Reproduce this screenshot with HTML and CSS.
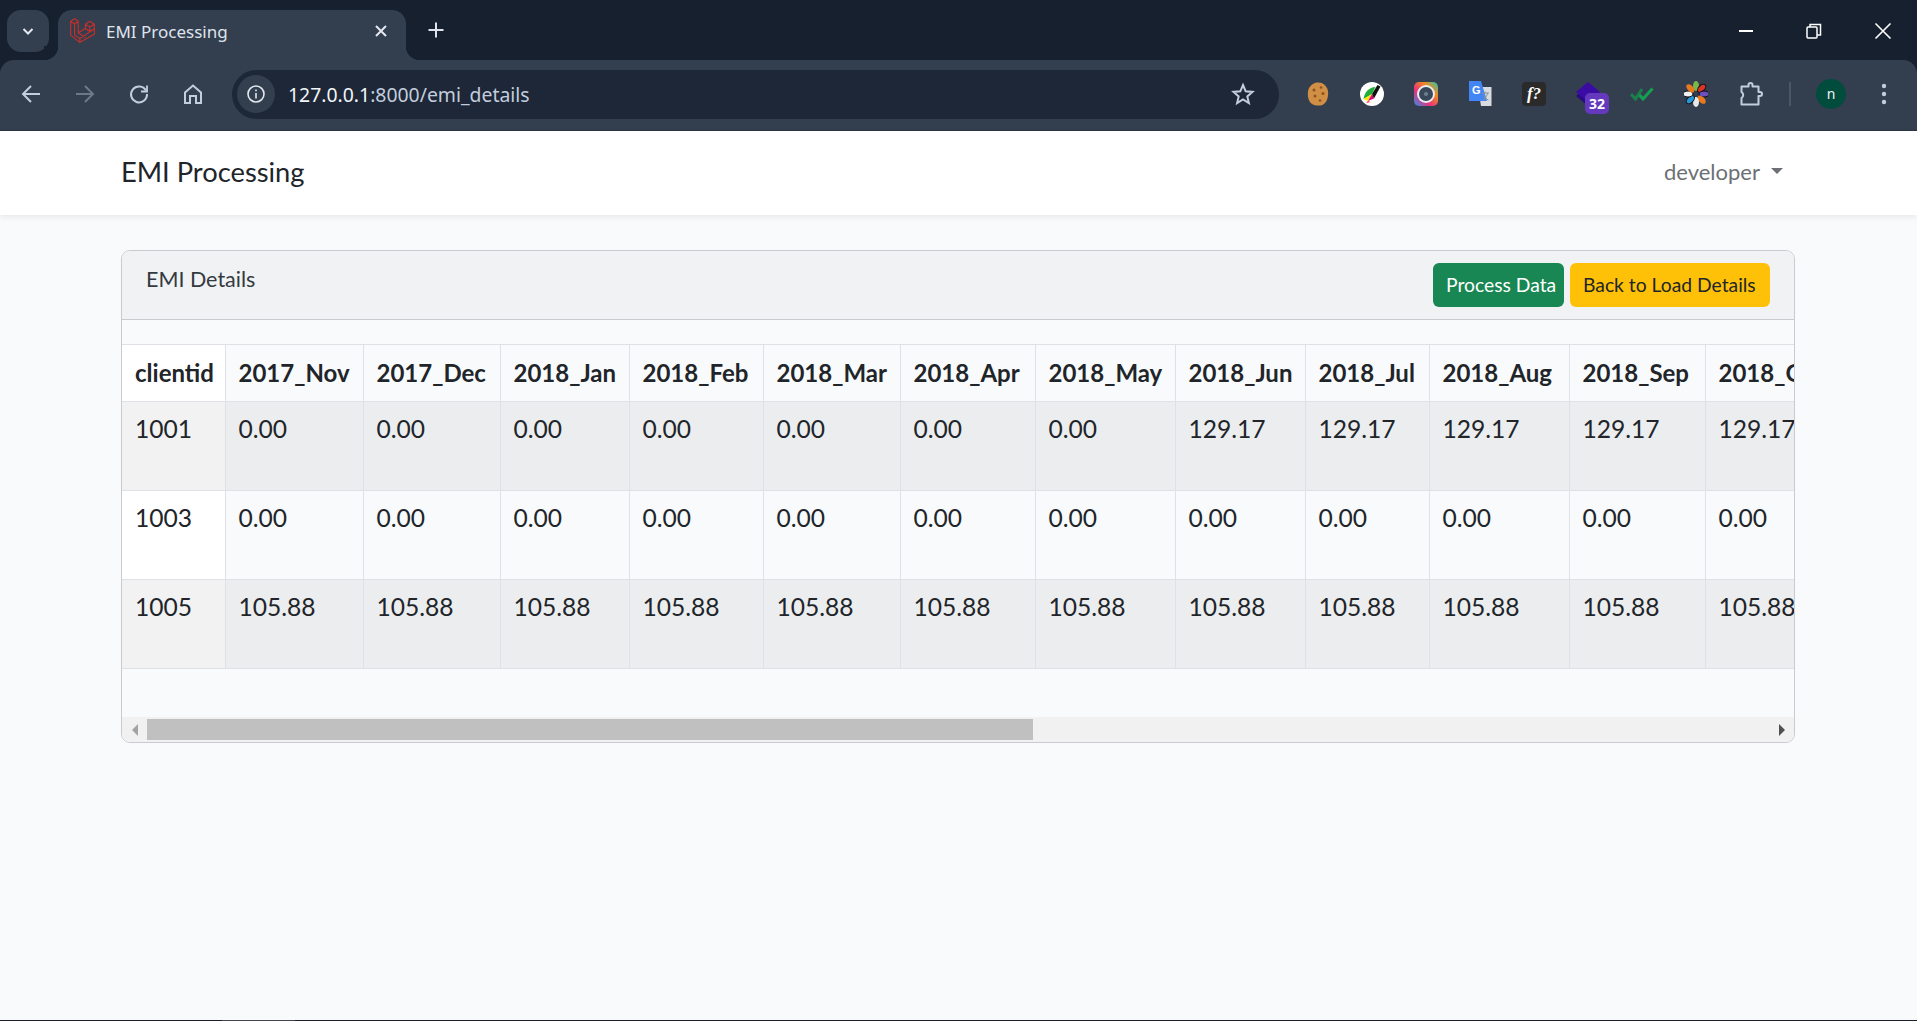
FILE: index.html
```html
<!DOCTYPE html>
<html lang="en">
<head>
    <meta charset="UTF-8">
    <meta name="viewport" content="width=device-width, initial-scale=1.0">
    <title>EMI Processing</title>
    <link rel="stylesheet" href="styles.css">
</head>
<body>
    <div class="browser">
        <!-- Browser tab strip -->
        <div class="tabstrip">
            <button class="tab-search">
                <svg width="16" height="16" viewBox="0 0 16 16"><path d="M3.5 6 8 10.5 12.500 6" fill="none" stroke="#e3e8f0" stroke-width="2"/></svg>
            </button>
            <div class="tab">
                <svg class="favicon" width="28" height="28" viewBox="25 20 85 85" fill="none" stroke="#c5302b" stroke-width="3.500" stroke-linejoin="round">
                    <path d="M30 33 42 25 53 33 42 41ZM30 33V75L58 97 102 72V56L58 85 42 75V41M53 33V68L75 82M58 85V97"/>
                    <path d="M75 42 88 33 102 42 88 50ZM75 42V55L53 68M102 42V56L88 64V50M88 64 75 55"/>
                </svg>
                <span class="tab-title">EMI Processing</span>
                <svg class="tab-close" width="14" height="14" viewBox="0 0 14 14"><path d="M2 2 12 12M12 2 2 12" stroke="#e3e8f0" stroke-width="2"/></svg>
            </div>
            <svg class="new-tab" width="18" height="18" viewBox="0 0 18 18"><path d="M9 1.500V16.500M1.500 9H16.500" stroke="#dfe4ec" stroke-width="2"/></svg>
            <div class="win-controls">
                <svg width="16" height="16" viewBox="0 0 16 16"><path d="M1 8H15" stroke="#fff" stroke-width="2"/></svg>
                <svg width="16" height="16" viewBox="0 0 16 16" fill="none" stroke="#fff" stroke-width="1.500"><rect x="1" y="4" width="10" height="11" rx="1"/><path d="M4 4V1.500H14.500V12H11"/></svg>
                <svg width="18" height="18" viewBox="0 0 18 18"><path d="M1.500 1.500 16.500 16.500M16.500 1.500 1.500 16.500" stroke="#fff" stroke-width="1.600"/></svg>
            </div>
        </div>

        <!-- Browser toolbar -->
        <div class="toolbar">
            <div class="nav-buttons">
                <svg width="22" height="22" viewBox="0 0 22 22" fill="none" stroke="#c3cddd" stroke-width="2"><path d="M20 11H3M11 3 3 11 11 19"/></svg>
                <svg width="22" height="22" viewBox="0 0 22 22" fill="none" stroke="#6f7887" stroke-width="2"><path d="M2 11H19M11 3 19 11 11 19"/></svg>
                <svg width="22" height="22" viewBox="0 0 22 22" fill="none" stroke="#c3cddd" stroke-width="2"><path d="M18 7.500A8 8 0 1 0 19 11"/><path d="M19 2.500V8.500H13" stroke-width="1.800"/></svg>
                <svg width="22" height="22" viewBox="0 0 22 22" fill="none" stroke="#c3cddd" stroke-width="2"><path d="M3 9.500 11 2.500 19 9.500V20H14V13H8V20H3Z"/></svg>
            </div>
            <div class="omnibox">
                <span class="site-info">
                    <svg width="20" height="20" viewBox="0 0 20 20" fill="none" stroke="#e3e8f0" stroke-width="1.600"><circle cx="10" cy="10" r="8"/><path d="M10 9V14.500M10 5.500V7.200"/></svg>
                </span>
                <span class="url">127.0.0.1<span class="url-dim">:8000/emi_details</span></span>
                <svg class="star" width="24" height="24" viewBox="0 0 24 24" fill="none" stroke="#c3cddd" stroke-width="2"><path d="M12 3 14.700 9.300 21.500 9.900 16.300 14.400 17.900 21.100 12 17.500 6.100 21.100 7.700 14.400 2.500 9.900 9.300 9.300Z"/></svg>
            </div>
            <div class="extensions">
                <svg width="22" height="24" viewBox="0 0 22 24"><path d="M11 .5C15 .5 17 2 19 4.500 21 7 21.500 10 21 13.500 20.500 18 19 21 15.500 23 12 24 8 23.800 5 22 2 20 .8 16 .8 12 .8 8 2 5 4.500 3 7 1 9 .5 11 .5Z" fill="#d08f45"/><g fill="#8a5522"><circle cx="7" cy="8" r="1.500"/><circle cx="14" cy="5.500" r="1.300"/><circle cx="16" cy="11.500" r="1.500"/><circle cx="8" cy="14" r="1.500"/><circle cx="13" cy="18.500" r="1.300"/></g></svg>
                <svg width="24" height="24" viewBox="0 0 24 24"><circle cx="12" cy="12" r="12" fill="#fff"/><path d="M3.500 17C4.500 10 9 5.500 15.500 5L12 12Z" fill="#1fae3a"/><path d="M3.500 17 12 12 8 19Z" fill="#ffe600"/><path d="M8 19 12 12 14 16.500Z" fill="#e6007e"/><path d="M12 12 17.500 3 20.500 4.500 14 16.500Z" fill="#111"/><path d="M6 21 8 19 10.500 20Z" fill="#f22"/></svg>
                <svg width="24" height="24" viewBox="0 0 24 24"><defs><linearGradient id="camera" x1="0" y1="1" x2="1" y2="0"><stop offset="0" stop-color="#2f8fe8"/><stop offset=".35" stop-color="#e8317f"/><stop offset=".7" stop-color="#f28a1e"/><stop offset="1" stop-color="#20c9b0"/></linearGradient></defs><rect width="24" height="24" rx="5" fill="url(#camera)"/><circle cx="12" cy="12" r="9" fill="#e9edf2"/><circle cx="12" cy="12" r="7" fill="#38485a"/><circle cx="12" cy="12" r="2" fill="#6a8092"/></svg>
                <svg width="26" height="26" viewBox="0 0 26 26"><path d="M11 6H24.500V25H14Z" fill="#d9dcdf"/><path d="M2 0H14L20 20H2Z" fill="#4285f4"/><text x="5" y="13" class="ext-g">G</text><path d="M14.500 12H22M18 10.500V12M16 19C18 18 20 15 20.500 12M16.500 14C17.500 16.500 19.500 18.500 21.500 19" stroke="#8a8f96" stroke-width="1" fill="none"/></svg>
                <span class="ext-f">f?</span>
                <span class="ext-stack">
                    <svg width="24" height="24" viewBox="0 0 24 24"><path d="M12 4 24 14 12 24 0 14Z" fill="#2a0a80"/><path d="M12 0 24 10 12 20 0 10Z" fill="#3a0ca3"/></svg>
                    <span class="ext-badge">32</span>
                </span>
                <svg width="24" height="14" viewBox="0 0 24 14" fill="none" stroke-width="3"><path d="M1 7 5.500 12 12 2" stroke="#1b7f4a"/><path d="M9.500 8 13 12 22.500 1.500" stroke="#12a150"/></svg>
                <svg width="24" height="26" viewBox="0 0 24 26">
                    <g transform="translate(12 13)">
                        <ellipse cy="-8" rx="3" ry="5" fill="#7ab648"/>
                        <ellipse cy="-8" rx="3" ry="5" fill="#d8342a" stroke="#111" transform="rotate(45)"/>
                        <ellipse cy="-8" rx="3" ry="5" fill="#6a50c0" stroke="#111" transform="rotate(90)"/>
                        <ellipse cy="-8" rx="3" ry="5" fill="#e8791f" transform="rotate(135)"/>
                        <ellipse cy="-8" rx="3" ry="5" fill="#e8e8e8" transform="rotate(180)"/>
                        <ellipse cy="-8" rx="3" ry="5" fill="#2595da" stroke="#111" transform="rotate(225)"/>
                        <ellipse cy="-8" rx="3" ry="5" fill="#f0f0f0" stroke="#111" transform="rotate(270)"/>
                        <ellipse cy="-8" rx="3" ry="5" fill="#e8791f" transform="rotate(315)"/>
                    </g>
                </svg>
                <svg class="ext-puzzle" width="24" height="24" viewBox="0 0 24 24" fill="none" stroke="#c3cddd" stroke-width="2" stroke-linejoin="round"><path d="M1.500 4.500H8.500V3A2 2 0 0 1 12.500 3V4.500H18.500V10H20A2 2 0 0 1 20 14H18.500V22.500H1.500V16A3.500 3.500 0 0 0 1.500 10Z"/></svg>
            </div>
            <span class="divider"></span>
            <span class="avatar">n</span>
            <svg class="kebab" width="6" height="22" viewBox="0 0 6 22"><g fill="#c3cddd"><circle cx="3" cy="3" r="2.200"/><circle cx="3" cy="11" r="2.200"/><circle cx="3" cy="19" r="2.200"/></g></svg>
        </div>
    </div>

    <!-- Page -->
    <nav class="navbar">
        <span class="brand">EMI Processing</span>
        <span class="user-menu">developer<i class="caret"></i></span>
    </nav>

    <main class="content">
        <div class="card">
            <div class="card-header">
                <span class="card-title">EMI Details</span>
                <div class="card-actions">
                    <a class="btn btn-success">Process Data</a>
                    <a class="btn btn-warning">Back to Load Details</a>
                </div>
            </div>
            <div class="table-responsive">
                <table class="emi-table">
                    <colgroup>
                        <col><col><col><col><col><col><col><col><col><col><col><col><col>
                    </colgroup>
                    <thead>
                        <tr>
                            <th>clientid</th><th>2017_Nov</th><th>2017_Dec</th><th>2018_Jan</th><th>2018_Feb</th><th>2018_Mar</th><th>2018_Apr</th><th>2018_May</th><th>2018_Jun</th><th>2018_Jul</th><th>2018_Aug</th><th>2018_Sep</th><th>2018_Oct</th>
                        </tr>
                    </thead>
                    <tbody>
                        <tr>
                            <td>1001</td><td>0.00</td><td>0.00</td><td>0.00</td><td>0.00</td><td>0.00</td><td>0.00</td><td>0.00</td><td>129.17</td><td>129.17</td><td>129.17</td><td>129.17</td><td>129.17</td>
                        </tr>
                        <tr>
                            <td>1003</td><td>0.00</td><td>0.00</td><td>0.00</td><td>0.00</td><td>0.00</td><td>0.00</td><td>0.00</td><td>0.00</td><td>0.00</td><td>0.00</td><td>0.00</td><td>0.00</td>
                        </tr>
                        <tr>
                            <td>1005</td><td>105.88</td><td>105.88</td><td>105.88</td><td>105.88</td><td>105.88</td><td>105.88</td><td>105.88</td><td>105.88</td><td>105.88</td><td>105.88</td><td>105.88</td><td>105.88</td>
                        </tr>
                    </tbody>
                </table>
            </div>
            <!-- Horizontal scrollbar of the table -->
            <div class="scrollbar">
                <span class="scroll-btn"><i class="arrow-left"></i></span>
                <span class="scroll-thumb"></span>
                <span class="scroll-btn"><i class="arrow-right"></i></span>
            </div>
        </div>
    </main>

    <div class="taskbar-edge"></div>
</body>
</html>
```

FILE: styles.css
```css
* {
    box-sizing: border-box;
}
html, body {
    height: 100%;
}
body {
    display: flex;
    flex-direction: column;
    margin: 0;
    font-family: Lato, "Open Sans", sans-serif;
    background-color: #f8fafc;
    color: #212529;
    overflow: hidden;
}
.browser {
    background-color: #16202f;
}

/* Browser tab strip */
.tabstrip {
    display: flex;
    align-items: flex-start;
    height: 60px;
    padding: 10px 0 0 7px;
}
.tab-search {
    display: flex;
    align-items: center;
    justify-content: center;
    width: 42px;
    height: 42px;
    padding: 0;
    border: none;
    border-radius: 14px;
    background-color: #333e4f;
}
.tab {
    position: relative;
    display: flex;
    align-items: center;
    width: 348px;
    height: 50px;
    margin-left: 9px;
    padding: 0 18px 8px 11px;
    border-radius: 14px 14px 0 0;
    background-color: #333e4f;
}
.tab::before,
.tab::after {
    content: "";
    position: absolute;
    bottom: 0;
    width: 14px;
    height: 14px;
}
.tab::before {
    left: -14px;
    background: radial-gradient(circle at 0 0, #16202f 14px, #333e4f 14.500px);
}
.tab::after {
    right: -14px;
    background: radial-gradient(circle at 100% 0, #16202f 14px, #333e4f 14.500px);
}
.tab-title {
    flex: 1;
    margin-left: 9px;
    font-family: "Noto Sans", sans-serif;
    font-size: 17px;
    color: #dfe4ec;
}
.new-tab {
    margin: 11px 0 0 21px;
}
.win-controls {
    display: flex;
    align-items: center;
    gap: 52px;
    margin-left: auto;
    padding: 12px 25px 0 0;
}

/* Browser toolbar */
.toolbar {
    display: flex;
    align-items: center;
    height: 71px;
    padding: 0 0 2px 20px;
    border-radius: 14px 14px 0 0;
    background-color: #333e4f;
    border-bottom: 1px solid #2b3543;
}
.nav-buttons {
    display: flex;
    align-items: center;
    gap: 32px;
}
.omnibox {
    display: flex;
    align-items: center;
    width: 1047px;
    height: 49px;
    margin-left: 28px;
    padding: 0 24px 0 5px;
    border-radius: 25px;
    background-color: #1d2737;
}
.site-info {
    display: flex;
    align-items: center;
    justify-content: center;
    width: 38px;
    height: 38px;
    border-radius: 50%;
    background-color: #333e4f;
}
.url {
    flex: 1;
    margin-left: 13px;
    font-family: "Noto Sans", sans-serif;
    font-size: 19.400px;
    color: #f2f5f9;
}
.url-dim {
    color: #c3cddd;
}
.extensions {
    display: grid;
    grid-template-columns: repeat(9, 54px);
    align-items: center;
    justify-items: center;
    margin-left: 12px;
}
.ext-g {
    font-family: "Liberation Sans", sans-serif;
    font-size: 11px;
    font-weight: bold;
    fill: #fff;
}
.ext-f {
    display: flex;
    align-items: center;
    justify-content: center;
    width: 24px;
    height: 24px;
    border-radius: 4px;
    background-color: #2a2a2a;
    color: #fff;
    font-family: "Liberation Serif", serif;
    font-style: italic;
    font-weight: bold;
    font-size: 17px;
}
.ext-stack {
    position: relative;
    display: block;
    width: 24px;
    height: 24px;
}
.ext-badge {
    position: absolute;
    left: 9px;
    top: 11px;
    width: 24px;
    height: 21px;
    border-radius: 5px;
    background-color: #6439bd;
    color: #fff;
    font-family: "Noto Sans", sans-serif;
    font-size: 14px;
    font-weight: bold;
    line-height: 21px;
    text-align: center;
}
.ext-puzzle {
    margin-left: 3px;
}
.divider {
    width: 2px;
    height: 24px;
    margin-left: 12px;
    background-color: #4c5666;
}
.avatar {
    width: 30px;
    height: 30px;
    margin-left: 25px;
    border-radius: 50%;
    background-color: #024c3e;
    color: #eef2f6;
    font-family: "Noto Sans", sans-serif;
    font-size: 14px;
    line-height: 29px;
    text-align: center;
}
.kebab {
    margin-left: 35px;
}

/* Page navbar */
.navbar {
    display: flex;
    align-items: center;
    justify-content: space-between;
    height: 84px;
    padding: 0 134px 4px 121px;
    background-color: #fff;
    box-shadow: 0 2px 6px rgba(0,0,0,0.08);
}
.brand {
    font-size: 27.300px;
    color: #212529;
}
.user-menu {
    display: flex;
    align-items: center;
    font-size: 22px;
    color: #6c7075;
}
.caret {
    width: 0;
    height: 0;
    margin-left: 11px;
    border-top: 6px solid #6c7075;
    border-left: 6px solid transparent;
    border-right: 6px solid transparent;
}

/* Card */
.content {
    flex: 1;
    padding: 35px 122px 0 121px;
}
.card {
    border: 1px solid #c9cbce;
    border-radius: 9px;
    overflow: hidden;
}
.card-header {
    display: flex;
    justify-content: space-between;
    height: 69px;
    padding: 12px 24px 0 24px;
    background-color: #f1f2f4;
    border-bottom: 1px solid #c9cbce;
}
.card-title {
    padding-top: 3px;
    font-size: 21.500px;
    color: #343a40;
}
.card-actions {
    display: flex;
    gap: 6px;
}
.btn {
    display: block;
    height: 44px;
    padding: 0 13px;
    border-radius: 6px;
    font-size: 19.300px;
    line-height: 43px;
}
.btn-success {
    width: 131px;
    background-color: #198754;
    color: #fff;
    white-space: nowrap;
}
.btn-warning {
    width: 200px;
    background-color: #ffc107;
    color: #212529;
    white-space: nowrap;
}

/* Table */
.table-responsive {
    padding: 24px 0 48px;
    overflow: hidden;
}
.emi-table {
    width: 1718px;
    table-layout: fixed;
    border-collapse: collapse;
}
.emi-table col {
    width: 135px;
}
.emi-table col:nth-child(1) { width: 103px; }
.emi-table col:nth-child(2) { width: 138px; }
.emi-table col:nth-child(3) { width: 137px; }
.emi-table col:nth-child(4) { width: 129px; }
.emi-table col:nth-child(5) { width: 134px; }
.emi-table col:nth-child(6) { width: 137px; }
.emi-table col:nth-child(7) { width: 135px; }
.emi-table col:nth-child(8) { width: 140px; }
.emi-table col:nth-child(9) { width: 130px; }
.emi-table col:nth-child(10) { width: 124px; }
.emi-table col:nth-child(11) { width: 140px; }
.emi-table col:nth-child(12) { width: 136px; }
.emi-table th,
.emi-table td {
    padding: 0 0 0 13px;
    border: 1px solid #dee2e6;
    text-align: left;
    white-space: nowrap;
    overflow: hidden;
}
.emi-table th {
    height: 57px;
    padding-bottom: 2px;
    font-size: 24px;
    font-weight: bold;
    color: #212529;
}
.emi-table td {
    height: 89px;
    padding-top: 12px;
    vertical-align: top;
    font-size: 24.600px;
    color: #212529;
}
.emi-table th:first-child,
.emi-table td:first-child {
    background-color: #fff;
    border-left: none;
}
.emi-table tbody tr:nth-child(odd) td {
    background-color: #ecedef;
}
.emi-table tbody tr:nth-child(odd) td:first-child {
    background-color: #f2f2f2;
}

/* Scrollbar */
.scrollbar {
    display: flex;
    height: 25px;
    background-color: #f1f1f1;
}
.scroll-btn {
    display: flex;
    align-items: center;
    justify-content: center;
    width: 25px;
}
.scroll-thumb {
    width: 886px;
    margin: 2px 0;
    background-color: #c0c0c0;
}
.scroll-thumb + .scroll-btn {
    margin-left: auto;
}
.arrow-left,
.arrow-right {
    width: 0;
    height: 0;
    border-top: 6px solid transparent;
    border-bottom: 6px solid transparent;
}
.arrow-left {
    border-right: 6px solid #a3a3a3;
}
.arrow-right {
    border-left: 6px solid #505050;
}

/* Strip of the desktop taskbar under the window */
.taskbar-edge {
    height: 1px;
    background: linear-gradient(to right, #1c1f2b 222px, #44464f 222px, #44464f 295px, #1c1f2b 295px);
}
```
